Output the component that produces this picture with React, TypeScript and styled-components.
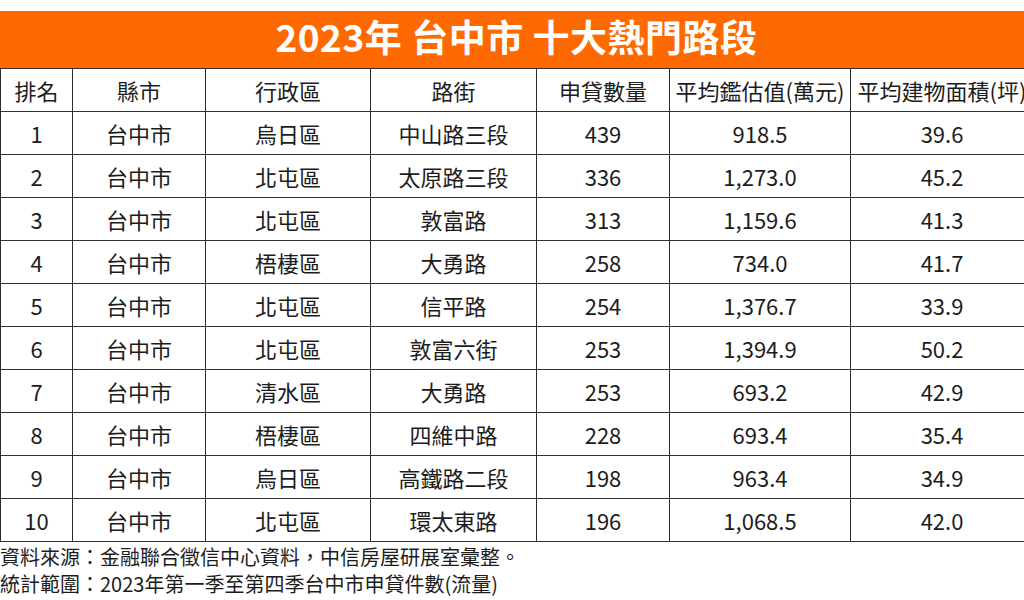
import styled, { createGlobalStyle } from "styled-components";

const GlobalStyle = createGlobalStyle`
  html, body {
    margin: 0;
    padding: 0;
    background: #ffffff;
  }
  body {
    font-family: "Noto Sans CJK TC", "Noto Sans", sans-serif;
    color: #1c1c1c;
  }
`;

const Page = styled.div`
  width: 1024px;
  height: 600px;
  overflow: hidden;
  padding-top: 11px;
  box-sizing: border-box;
`;

const Sheet = styled.div`
  width: 1033px;
`;

const Banner = styled.h1`
  margin: 0;
  height: 57px;
  box-sizing: border-box;
  padding-bottom: 6px;
  background: #ff6a00;
  color: #ffffff;
  font-size: 37px;
  font-weight: 700;
  line-height: 51px;
  text-align: center;
  letter-spacing: 0.5px;
`;

const Table = styled.table`
  width: 1033px;
  table-layout: fixed;
  border-collapse: collapse;
`;

const HeadCell = styled.th`
  height: 42px;
  padding: 0;
  border: 1px solid #2e2e2e;
  font-size: 22px;
  font-weight: 400;
  text-align: center;
  white-space: nowrap;
  overflow: hidden;
`;

const Cell = styled.td`
  height: 42px;
  padding: 0;
  border: 1px solid #2e2e2e;
  font-size: 22px;
  text-align: center;
  white-space: nowrap;
`;

const Notes = styled.div`
  padding-top: 1px;
  font-size: 20px;
  line-height: 27px;
  white-space: nowrap;
`;

const columns = [
  { label: "排名", width: 72 },
  { label: "縣市", width: 133 },
  { label: "行政區", width: 165 },
  { label: "路街", width: 166 },
  { label: "申貸數量", width: 133 },
  { label: "平均鑑估值(萬元)", width: 181 },
  { label: "平均建物面積(坪)", width: 183 },
];

const rows = [
  ["1", "台中市", "烏日區", "中山路三段", "439", "918.5", "39.6"],
  ["2", "台中市", "北屯區", "太原路三段", "336", "1,273.0", "45.2"],
  ["3", "台中市", "北屯區", "敦富路", "313", "1,159.6", "41.3"],
  ["4", "台中市", "梧棲區", "大勇路", "258", "734.0", "41.7"],
  ["5", "台中市", "北屯區", "信平路", "254", "1,376.7", "33.9"],
  ["6", "台中市", "北屯區", "敦富六街", "253", "1,394.9", "50.2"],
  ["7", "台中市", "清水區", "大勇路", "253", "693.2", "42.9"],
  ["8", "台中市", "梧棲區", "四維中路", "228", "693.4", "35.4"],
  ["9", "台中市", "烏日區", "高鐵路二段", "198", "963.4", "34.9"],
  ["10", "台中市", "北屯區", "環太東路", "196", "1,068.5", "42.0"],
];

const App = () => {
  return (
    <Page>
      <GlobalStyle />
      <Sheet>
        <Banner>2023年 台中市 十大熱門路段</Banner>
        <Table>
          <colgroup>
            {columns.map((c) => (
              <col key={c.label} style={{ width: c.width }} />
            ))}
          </colgroup>
          <thead>
            <tr>
              {columns.map((c) => (
                <HeadCell key={c.label}>{c.label}</HeadCell>
              ))}
            </tr>
          </thead>
          <tbody>
            {rows.map((r) => (
              <tr key={r[0]}>
                {r.map((v, i) => (
                  <Cell key={i}>{v}</Cell>
                ))}
              </tr>
            ))}
          </tbody>
        </Table>
        <Notes>
          <div>資料來源：金融聯合徵信中心資料，中信房屋研展室彙整。</div>
          <div>統計範圍：2023年第一季至第四季台中市申貸件數(流量)</div>
        </Notes>
      </Sheet>
    </Page>
  );
};

export default App;
